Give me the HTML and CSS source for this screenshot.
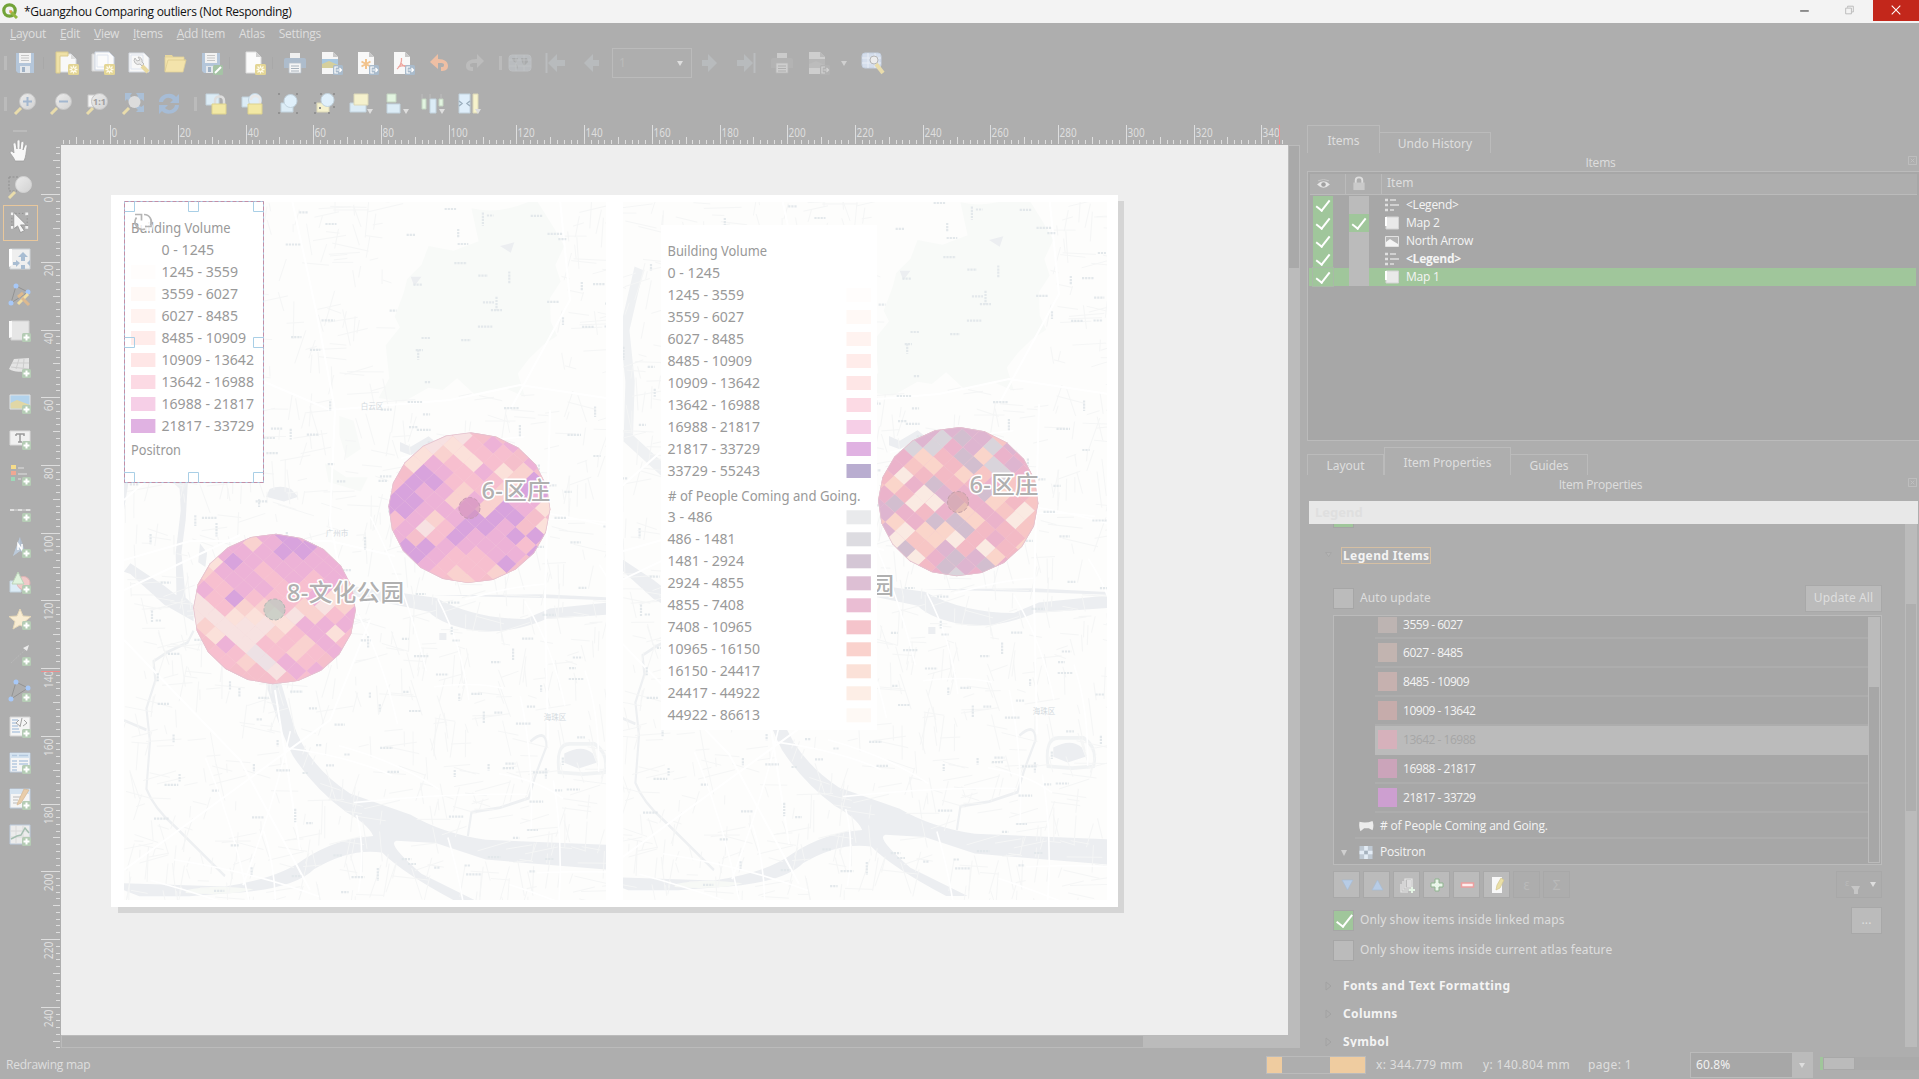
FILE: index.html
```html
<!DOCTYPE html>
<html lang="en">
<head>
<meta charset="utf-8">
<title>*Guangzhou Comparing outliers</title>
<link rel="stylesheet" href="styles.css">
</head>
<body>
<svg class="defs" width="0" height="0" aria-hidden="true">
<defs>
<linearGradient id="lens" x1="0" y1="0" x2="1" y2="1"><stop offset="0" stop-color="#ececec"/><stop offset="1" stop-color="#d2d2d2"/></linearGradient>
<g id="plus"><rect x="14" y="14" width="9" height="9" rx="1.5" fill="#b5ccb5"/><path d="M18.5 15.5v6M15.5 18.5h6" stroke="#fff" stroke-width="2"/></g>
<g id="star-badge"><rect x="13" y="13" width="11" height="11" rx="1.5" fill="#e3d594"/><path d="M18.500 14.500v8M14.500 18.500h8M15.500 15.500l6 6M21.500 15.500l-6 6" stroke="#fffbe8" stroke-width="1.300"/><circle cx="18.500" cy="18.500" r="1.200" fill="#e3d594"/></g>
<g id="out-badge"><rect x="14" y="14" width="10" height="10" rx="1.500" fill="#a9bbcc"/><path d="M19 16h-3v6h3M17.500 19h5M20.500 17l2 2-2 2" stroke="#fff" fill="none" stroke-width="1.200"/></g>
<g id="caret"><path d="M18 17h6l-3 5z" fill="#dedede"/></g>
<symbol id="save" viewBox="0 0 24 24"><path d="M3 2h18v20H5l-2-2z" fill="#b4c6da"/><path d="M6 2h12v10H6z" fill="#f2f2f2"/><path d="M8 4.500h8M8 7h8M8 9.500h8" stroke="#c6c6c6"/><path d="M7 15h10v7H7z" fill="#e4e8ec"/><path d="M9 16h3v5H9z" fill="#a0b2c6"/></symbol>
<symbol id="saveas" viewBox="0 0 24 24"><use href="#save"/><rect x="14" y="14" width="10" height="10" rx="1.500" fill="#a5c3a5"/><path d="M16 22l6-6" stroke="#fff" stroke-width="2"/></symbol>
<symbol id="newlay" viewBox="0 0 24 24"><path d="M4 3h12l5 5v13H4z" fill="#f8f8f8" stroke="#d8dce2"/><path d="M1 1h12v4H5v17H1z" fill="#efe1a6" stroke="#dacb8e"/><path d="M16 3v5h5" fill="#ddd"/><use href="#star-badge"/></symbol>
<symbol id="duplay" viewBox="0 0 24 24"><path d="M1 3h15v17H1z" fill="#e9e9e9" stroke="#d4d4d4"/><path d="M4 1h14l5 5v13H4z" fill="#fbfbfb" stroke="#cdd5e2"/><path d="M6 4h11v12H6z" fill="none" stroke="#dfe5f0"/><use href="#star-badge"/></symbol>
<symbol id="manlay" viewBox="0 0 24 24"><path d="M2 2h15l5 5v14H2z" fill="#f8f8f8" stroke="#d5dae2"/><path d="M4 4h12v14H4z" fill="none" stroke="#dfe5f0"/><path d="M8 7a4 4 0 0 0 5 6l2 2 2-2-2-2a4 4 0 0 0-4-5l2 3-3 1z" fill="#e9e9e9" stroke="#bdbdbd"/><path d="M15 15l6 6" stroke="#e8d9a0" stroke-width="4"/></symbol>
<symbol id="folder" viewBox="0 0 24 24"><path d="M2 20V4h7l2 3h10v3" fill="#e8d79d"/><path d="M2 20V6h19v3h2l-3 12H2z" fill="#f3e3ab" stroke="#e0d09a" stroke-width=".8"/><path d="M2 20L5 9h18" fill="none" stroke="#dccb90" stroke-width=".8"/></symbol>
<symbol id="newpage" viewBox="0 0 24 24"><path d="M4 1h10l5 5v16H4z" fill="#fbfbfb" stroke="#ddd"/><path d="M14 1v5h5z" fill="#d0d0d0"/><use href="#star-badge"/></symbol>
<symbol id="print" viewBox="0 0 24 24"><path d="M7 2h10v6H7z" fill="#efefef"/><path d="M3 7h18q2 0 2 2v8H1V9q0-2 2-2z" fill="#adbccc"/><path d="M6 12h12v10H6z" fill="#f5f5f5" stroke="#b8c2cc" stroke-width=".8"/><path d="M8 15h8M8 17.500h8M8 20h8" stroke="#a9b3bd"/></symbol>
<symbol id="eximg" viewBox="0 0 24 24"><path d="M3 1h11l5 5v17H3z" fill="#f6f6f6"/><path d="M14 1v5h5z" fill="#c9c9c9"/><path d="M3 8h16v9H3z" fill="#a9c8e0"/><path d="M3 13l7-3 9 4v3H3z" fill="#d5cf9c"/><use href="#out-badge"/></symbol>
<symbol id="exsvg" viewBox="0 0 24 24"><path d="M3 1h11l5 5v17H3z" fill="#f8f8f8"/><path d="M14 1v5h5z" fill="#c9c9c9"/><path d="M11 8v10M6.500 10.500l9 5M15.500 10.500l-9 5" stroke="#f2c38c" stroke-width="2"/><use href="#out-badge"/></symbol>
<symbol id="expdf" viewBox="0 0 24 24"><path d="M3 1h11l5 5v17H3z" fill="#f8f8f8"/><path d="M14 1v5h5z" fill="#c9c9c9"/><path d="M6 18c3-2 5-7 4.500-11M10 12c2 3 4 4 6 4M7 16c3-1 6-2 9-1" fill="none" stroke="#eda7a0" stroke-width="1.300"/><use href="#out-badge"/></symbol>
<symbol id="undo" viewBox="0 0 24 24"><path d="M3 11l8-8v5c7 0 10 3 10 7s-3 5-7 5v-4c2 0 3 0 3-2s-2-2-6-2v6z" fill="#eebfa4"/></symbol>
<symbol id="redo" viewBox="0 0 24 24"><path d="M21 10l-7-7v5C6 8 3 11 3 15s3 5 7 5v-4c-2 0-3 0-3-2s3-2 7-2v5z" fill="#bcbcbc"/></symbol>
<symbol id="atlas" viewBox="0 0 24 24"><rect x="1" y="4" width="22" height="16" rx="3" fill="#b9bcbf" stroke="#bdbfc1"/><path d="M4 7h6l-2 5-3-2zM13 7h6l1 4-4 4-2-4zM8 13l2 2-1 4" fill="#a9abac"/><path d="M1 9h22M1 15h22M8 4v16M16 4v16" stroke="#c3c5c7" stroke-width=".7"/></symbol>
<symbol id="first" viewBox="0 0 24 24"><path d="M2.500 2v20" stroke="#bbbdbf" stroke-width="2"/><path d="M4 12l9-9v6h8v6h-8v6z" fill="#b8bbbd"/></symbol>
<symbol id="prev" viewBox="0 0 24 24"><path d="M4 12l9-9v6h6v6h-6v6z" fill="#b8bbbd"/></symbol>
<symbol id="next" viewBox="0 0 24 24"><path d="M19 12l-9-9v6H4v6h6v6z" fill="#b8bbbd"/></symbol>
<symbol id="last" viewBox="0 0 24 24"><path d="M20.500 2v20" stroke="#bbbdbf" stroke-width="2"/><path d="M19 12l-9-9v6H3v6h7v6z" fill="#b8bbbd"/></symbol>
<symbol id="aset" viewBox="0 0 24 24"><rect x="1" y="2" width="19" height="15" rx="3" fill="#d5deec" stroke="#c5d0e0"/><path d="M1 7h19M1 12h19M7 2v15M14 2v15" stroke="#e8edf5"/><circle cx="13" cy="9" r="4" fill="#ececec" stroke="#b6b6b6"/><path d="M15 13l7 9" stroke="#e9dcab" stroke-width="4"/></symbol>
<symbol id="zin" viewBox="0 0 24 24"><path d="M2 22l6-6" stroke="#e9dcab" stroke-width="3"/><circle cx="14.500" cy="9.500" r="8" fill="url(#lens)" stroke="#c6c6c6"/><path d="M14.500 5v9M10 9.500h9" stroke="#a3b7cf" stroke-width="2"/></symbol>
<symbol id="zout" viewBox="0 0 24 24"><path d="M2 22l6-6" stroke="#e9dcab" stroke-width="3"/><circle cx="14.500" cy="9.500" r="8" fill="url(#lens)" stroke="#c6c6c6"/><path d="M10 9.500h9" stroke="#a3b7cf" stroke-width="2"/></symbol>
<symbol id="z11" viewBox="0 0 24 24"><path d="M3 3h8v12H3z" fill="#f2f2f2" stroke="#ccc"/><path d="M2 22l6-6" stroke="#e9dcab" stroke-width="3"/><circle cx="14.500" cy="9.500" r="8" fill="url(#lens)" stroke="#c6c6c6"/><text x="14.500" y="13" font-size="9" font-weight="bold" text-anchor="middle" fill="#a0a0a0">1:1</text></symbol>
<symbol id="zfull" viewBox="0 0 24 24"><path d="M2 22l6-6" stroke="#e9dcab" stroke-width="3"/><path d="M4 1h7L9 4l4 4-4 3-3-4-2 2zM23 1v8l-3-2-4 4-3-3 4-4-2-3zM23 20h-8l2-2-4-4 3-3 4 4 3-2z" fill="#aabfd6"/><circle cx="13.500" cy="10" r="6" fill="#dcdcdc"/></symbol>
<symbol id="refresh" viewBox="0 0 24 24"><path d="M2 10C2 2 15-1 19 5l3-3v9h-9l3-3C12 4 7 6 6 10zM22 13c0 9-13 11-17 6l-3 3v-9h9l-3 3c4 4 9 2 10-3z" fill="#a6bcd6"/></symbol>
<symbol id="lock" viewBox="0 0 24 24"><path d="M1 2h13v11H1z" fill="#dcecf6" stroke="#c2d3de"/><path d="M10 13V9q0-4.500 4.500-4.500T19 9v4" fill="none" stroke="#dedede" stroke-width="2.500"/><path d="M7 12h14v10H7z" fill="#f2e8a4" stroke="#ddd28e"/></symbol>
<symbol id="unlock" viewBox="0 0 24 24"><path d="M1 5h12v10H1z" fill="#dcecf6" stroke="#c2d3de"/><circle cx="14" cy="8" r="6.500" fill="#e0eef8" stroke="#c2d3de"/><path d="M10 8q0-4 4.500-4T19 8v5" fill="none" stroke="#e8e8e8" stroke-width="2.500"/><path d="M7 12h14v10H7z" fill="#f2e8a4" stroke="#ddd28e"/></symbol>
<symbol id="group" viewBox="0 0 24 24"><path d="M4 11h12v9H4z" fill="#dcecf6" stroke="#c2d3de"/><circle cx="13.500" cy="9" r="6.500" fill="#e0f0fb" stroke="#c2d3de"/><path d="M1 1h2v2H1zM19 1h2v2h-2zM1 20h2v2H1zM19 20h2v2h-2z" fill="#929292"/></symbol>
<symbol id="ungroup" viewBox="0 0 24 24"><path d="M4 11h12v9H4z" fill="#f5f1cd" stroke="#dcd8b8"/><circle cx="14.500" cy="8" r="6.500" fill="#e0f0fb" stroke="#c2d3de"/><path d="M7 1h2v2H7zM20 1h2v2h-2zM1 10h2v2H1zM1 20h2v2H1zM15 20h2v2h-2zM6 15h2v2H6zM20 14h2v2h-2z" fill="#929292"/></symbol>
<symbol id="raise" viewBox="0 0 24 24"><path d="M1 11h16v9H1z" fill="#dcecf6" stroke="#c2d3de"/><path d="M5 2h14v11H5z" fill="#f5f1cd" stroke="#dcd8b8"/><use href="#caret"/></symbol>
<symbol id="align" viewBox="0 0 24 24"><path d="M2 2h9v8H2z" fill="#e2f4e0" stroke="#c4d6c2"/><path d="M2 12h13v9H2z" fill="#dcecf6" stroke="#c2d3de"/><use href="#caret"/></symbol>
<symbol id="distrib" viewBox="0 0 24 24"><path d="M1 7h4v10H1zM18 7h4v7h-4z" fill="#e2f4e0" stroke="#c4d6c2"/><path d="M9 7h6v14H9z" fill="#dcecf6" stroke="#c2d3de"/><path d="M1 2v5M9 2v5M20 2v5" stroke="#bdbdbd"/><use href="#caret"/></symbol>
<symbol id="resize" viewBox="0 0 24 24"><path d="M2 2h11v19H2z" fill="#dfeefa" stroke="#c2d3de"/><path d="M16 2h5v19h-5z" fill="#f7f3cc" stroke="#dcd8b8"/><path d="M2 9l3 2.500L2 14M13 9l-3 2.500 3 2.500" stroke="#9db0bf" fill="none" stroke-width="1.500"/><use href="#caret"/></symbol>
<symbol id="hand" viewBox="0 0 24 24"><path d="M7 22c-1-4-5-7-5-9 1-2 3 0 4 1L5 5c1-2 3-1 3 0l1 5V2c1-2 3-1 3 0v8l1-7c1-1 3-1 3 1l-1 7 2-5c1-1 3 0 2 2-1 5-1 10-3 14z" fill="#f8f8f8" stroke="#a0a0a0" stroke-width=".8"/></symbol>
<symbol id="zoomt" viewBox="0 0 24 24"><path d="M1 2h9M1 2v14h8" fill="none" stroke="#8f8f8f" stroke-dasharray="2 1.500"/><path d="M1 23l6-6" stroke="#e9dcab" stroke-width="3"/><circle cx="15.500" cy="9.500" r="8" fill="url(#lens)" stroke="#d2d2d2"/></symbol>
<symbol id="select" viewBox="0 0 24 24"><path d="M3 2h16v15H3z" fill="none" stroke="#8f8f8f" stroke-dasharray="1.500 2"/><path d="M2 1h3v3H2zM17 1h3v3h-3zM2 15h3v3H2zM17 15h3v3h-3z" fill="#f0f0f0"/><path d="M5 1l13 13-6 0 4 6-4 2-3-7-4 3z" fill="#f6f6f6" stroke="#909090" stroke-width=".8"/></symbol>
<symbol id="movec" viewBox="0 0 24 24"><path d="M2 2h20v20H2z" fill="#efefef" stroke="#cdd2d6"/><path d="M1 2h3v16l-3 2z" fill="#fff"/><path d="M15 5l5 5h-3v4h-4v-4h-3zM5 15h3v-2l4 3-4 4v-2H5zM13 18h4v4h-4zM22 13v6l-3-3z" fill="#a9bdd2"/></symbol>
<symbol id="nodes" viewBox="0 0 24 24"><path d="M8 3L3 20M8 3l12 6M3 20l17-11" stroke="#909090" stroke-width=".9"/><circle cx="8" cy="3" r="2.500" fill="#a7c8f7"/><circle cx="20" cy="9" r="2.500" fill="#a7c8f7"/><circle cx="3" cy="20" r="2.500" fill="#a7c8f7"/><path d="M10 21l10-10" stroke="#f1dda1" stroke-width="3"/><path d="M10 14l5-4M14 15l7 7" stroke="#dcb98f" stroke-width="3"/></symbol>
<symbol id="addmap" viewBox="0 0 24 24"><path d="M3 2h18v19H3z" fill="#e6e6e6" stroke="#d2d2d2"/><path d="M1 2h3v16l-3 1z" fill="#fafafa"/><use href="#plus"/></symbol>
<symbol id="add3d" viewBox="0 0 24 24"><path d="M1 14L6 4l15-1v15c-7-2-14 0-20-4z" fill="#e4e4e4"/><path d="M4 8l17 0M3 12l18 2M11 4L8 14M16 4l-1 12" stroke="#cdcdcd"/><use href="#plus"/></symbol>
<symbol id="addpic" viewBox="0 0 24 24"><path d="M2 4h20v14H2z" fill="#b3d3ec" stroke="#e1e4e6"/><path d="M2.500 12L9 9l13 5v3.500H2.500z" fill="#e0d7a6"/><use href="#plus"/></symbol>
<symbol id="addtxt" viewBox="0 0 24 24"><path d="M2 4h20v14H2z" fill="#f1f1f1" stroke="#dadada"/><path d="M8 7h8v2M8 7v2M12 7v8M10 15h4" fill="none" stroke="#9a9a9a" stroke-width="1.500"/><use href="#plus"/></symbol>
<symbol id="addleg" viewBox="0 0 24 24"><path d="M3 2h5v4H3z" fill="#f6dc8a"/><path d="M3 8h5v4H3z" fill="#f0a792"/><path d="M3 14h4v4H3z" fill="#9ed8b8"/><path d="M10 5h6M10 11h9M10 16h3" stroke="#cfcfcf" stroke-width="1.500"/><use href="#plus"/></symbol>
<symbol id="addscale" viewBox="0 0 24 24"><path d="M2 11h21" stroke="#c3c3c3" stroke-width="2"/><path d="M2 11h21" stroke="#e0e0e0" stroke-width="2" stroke-dasharray="4 4"/><use href="#plus"/></symbol>
<symbol id="addnorth" viewBox="0 0 24 24"><path d="M12 2l7 19-7-5-7 5z" fill="#b0bccc"/><path d="M12 2L5 21l7-5z" fill="#bccada"/><path d="M10 15V9l4 6V9" stroke="#fff" fill="none" stroke-width="1.500"/><use href="#plus"/></symbol>
<symbol id="addshape" viewBox="0 0 24 24"><path d="M2 10h11v11H2z" fill="#dcecf6" stroke="#c2d3de"/><circle cx="15.500" cy="12" r="6.500" fill="#f0c9c9" stroke="#dfb4b4"/><path d="M10 1l6 12H4z" fill="#dff3dc" stroke="#bcd3ba"/><use href="#plus"/></symbol>
<symbol id="addstar" viewBox="0 0 24 24"><path d="M12 2l3 7 8 .5-6 5 2 7.500-7-4-7 4 2-7.500-6-5L9 9z" fill="#f8ecd2" stroke="#e6d8b8"/><use href="#plus"/></symbol>
<symbol id="addarrow" viewBox="0 0 24 24"><path d="M3 20L18 6" stroke="#b9b9b9" stroke-dasharray="2 1"/><path d="M21 2l-6 3 4 3z" fill="#ececec"/><use href="#plus"/></symbol>
<symbol id="addnode" viewBox="0 0 24 24"><path d="M8 3L3 20M8 3l12 6M3 20l17-11" stroke="#909090" stroke-width=".9"/><circle cx="8" cy="3" r="2.500" fill="#a7c8f7"/><circle cx="20" cy="9" r="2.500" fill="#a7c8f7"/><circle cx="3" cy="20" r="2.500" fill="#a7c8f7"/><use href="#plus"/></symbol>
<symbol id="addhtml" viewBox="0 0 24 24"><path d="M2 2h20v19H2z" fill="#f5f5f5" stroke="#d3d3d3"/><path d="M4 5h6M4 8h4M4 11h6M4 14h7M4 17h8" stroke="#b5c9df" stroke-width="1.500"/><path d="M11 5L8 8l4 3M14 3l-2 9M16 5l3 3-4 3" stroke="#a3a3a3" fill="none"/><use href="#plus"/></symbol>
<symbol id="addtab" viewBox="0 0 24 24"><path d="M2 2h20v19H2z" fill="#f5f5f5" stroke="#bccbdd"/><path d="M2 2h20v5H2z" fill="#d5e3f0"/><path d="M4 4.500h5M11 4.500h9M4 10h5M11 10h9M4 13h5M11 13h9M4 16h5M4 19h5" stroke="#b5c9df" stroke-width="1.300"/><use href="#plus"/></symbol>
<symbol id="addman" viewBox="0 0 24 24"><path d="M2 2h20v19H2z" fill="#f5f5f5" stroke="#bccbdd"/><path d="M2 2h20v5H2z" fill="#d5e3f0"/><path d="M5 10h8M5 13h5M5 16h8" stroke="#bbb"/><path d="M10 15L16 2l5 1-8 13-4 2z" fill="#e9cdaa" stroke="#d6b894" stroke-width=".7"/><use href="#plus"/></symbol>
<symbol id="addchart" viewBox="0 0 24 24"><path d="M2 2h20v19H2z" fill="#ececec" stroke="#bccbdd"/><path d="M2 8h20M2 14h20M8 2v19M15 2v19" stroke="#dadada"/><path d="M3 16l6-3 4-1 4-7 4 5" stroke="#a5bfb1" fill="none" stroke-width="1.500"/><use href="#plus"/></symbol>
<symbol id="leg" viewBox="0 0 14 14"><path d="M0 2h3M0 7h3M0 12h3" stroke="#e0e0e0" stroke-width="2.500"/><path d="M5 2h6M5 7h9M5 12h4" stroke="#e0e0e0" stroke-width="1.500"/></symbol>
<symbol id="mapi" viewBox="0 0 14 14"><path d="M1 1h12.500v12H1z" fill="#e9e9e9" stroke="#d4d4d4"/><path d="M0 1h2v9H0z" fill="#fff"/></symbol>
<symbol id="pici" viewBox="0 0 14 14"><path d="M.5 2.500h13v10H.5z" fill="#b4b4b4" stroke="#e2e2e2"/><path d="M1 8l4-3 3 2 5 3v2H1z" fill="#f4f4f4"/></symbol>
</defs>
</svg>

<div class="app">
<header class="title">
  <svg class="logo" viewBox="0 0 16 16"><circle cx="7.500" cy="7.500" r="5.700" fill="none" stroke="#72a338" stroke-width="3.200"/><path d="M8 8l7 7" stroke="#93b740" stroke-width="3"/><path d="M7 7l3.500 1-2 2.500z" fill="#e99d4a"/></svg>
  <span class="title-text">*Guangzhou Comparing outliers (Not Responding)</span>
  <div class="winbtns">
    <svg viewBox="0 0 45 22"><path d="M19 11.500h9" stroke="#222"/></svg>
    <svg viewBox="0 0 45 22"><path d="M18.500 8.500h6v6h-6zM20.500 8V6.500h6v6H25" fill="none" stroke="#bbb"/></svg>
    <svg class="close" viewBox="0 0 45 22"><path d="M18 6l9 9M27 6l-9 9" stroke="#fff" stroke-width="1.100"/></svg>
  </div>
</header>
<nav class="menu"><span><u>L</u>ayout</span><span><u>E</u>dit</span><span><u>V</u>iew</span><span><u>I</u>tems</span><span><u>A</u>dd Item</span><span>Atlas</span><span>Settings</span></nav>
<div class="bar bar1">
  <i class="grip"></i>
  <svg><use href="#save"/></svg><i class="sep s6"></i>
  <svg><use href="#newlay"/></svg><svg><use href="#duplay"/></svg><svg><use href="#manlay"/></svg><svg><use href="#folder"/></svg><svg><use href="#saveas"/></svg><i class="sep s7"></i>
  <svg><use href="#newpage"/></svg><i class="sep s5"></i>
  <svg><use href="#print"/></svg><svg><use href="#eximg"/></svg><svg><use href="#exsvg"/></svg><svg><use href="#expdf"/></svg><svg><use href="#undo"/></svg><svg><use href="#redo"/></svg><i class="grip g2"></i>
  <svg><use href="#atlas"/></svg><svg><use href="#first"/></svg><svg><use href="#prev"/></svg>
  <div class="pagebox"><span>1</span><b class="tri"></b></div>
  <svg><use href="#next"/></svg><svg><use href="#last"/></svg><svg class="dim"><use href="#print"/></svg><svg class="dim"><use href="#eximg"/></svg><b class="tri solo"></b>
  <svg><use href="#aset"/></svg>
</div>
<div class="bar bar2">
  <i class="grip"></i>
  <svg><use href="#zin"/></svg><svg><use href="#zout"/></svg><svg><use href="#z11"/></svg><svg><use href="#zfull"/></svg><svg><use href="#refresh"/></svg><i class="grip g3"></i>
  <svg><use href="#lock"/></svg><svg><use href="#unlock"/></svg><svg><use href="#group"/></svg><svg><use href="#ungroup"/></svg><svg><use href="#raise"/></svg><svg><use href="#align"/></svg><svg><use href="#distrib"/></svg><svg><use href="#resize"/></svg>
</div>

<main class="main">
  <aside class="tools">
    <i class="tgrip"></i>
    <svg><use href="#hand"/></svg><svg><use href="#zoomt"/></svg><svg class="on"><use href="#select"/></svg><svg><use href="#movec"/></svg><svg><use href="#nodes"/></svg><svg><use href="#addmap"/></svg><svg><use href="#add3d"/></svg><svg><use href="#addpic"/></svg><svg><use href="#addtxt"/></svg><svg><use href="#addleg"/></svg><svg><use href="#addscale"/></svg><svg><use href="#addnorth"/></svg><svg><use href="#addshape"/></svg><svg><use href="#addstar"/></svg><svg><use href="#addarrow"/></svg><svg><use href="#addnode"/></svg><svg><use href="#addhtml"/></svg><svg><use href="#addtab"/></svg><svg><use href="#addman"/></svg><svg><use href="#addchart"/></svg>
  </aside>
  <section class="view">
    <svg id="canvas" width="1260" height="924" viewBox="40 124 1260 924">
      <defs>
        <clipPath id="m1"><path d="M124 202h482v698H124z"/></clipPath>
        <clipPath id="m2"><path d="M623 202h484v698H623z"/></clipPath>
        <clipPath id="cA"><path id="gonA"/></clipPath>
        <clipPath id="cB"><path id="gonB"/></clipPath>
        <clipPath id="cC"><path id="gonC"/></clipPath>
        <g id="base">
          <path d="M100 180h540v740H100z" fill="#fdfdfc"/>
          <g transform="translate(100 180) scale(.35714 .47192)">
            <path d="M1040 60Q1120 75 1220 40L1270 100 1300 140 1275 180 1290 215 1260 250 1262 300 1280 330 1240 350 1200 380 1170 410 1190 460 1130 440 1050 455 1000 420 960 445 920 440 850 470 780 462 810 420 800 350 840 312 825 290 850 240 860 210 900 180 920 140 990 150 1060 130ZM630 600l60 30 60 0-20 30-90-20zM670 500l40 10 20 60-40 20-20-50z" fill="#f8faf8"/>
            <g fill="#eceef1">
              <path d="M462 1060L505 1060 540 1150Q580 1240 700 1300L870 1345Q960 1385 1080 1398L1465 1410V1464L1270 1452 1080 1440 940 1405 830 1400Q800 1405 900 1470L1060 1530 1000 1530Q850 1470 790 1425 700 1415 600 1460 540 1505 350 1512L250 1518H110L67 1505V1490L350 1497Q500 1480 570 1440 660 1395 765 1390 750 1365 690 1340 600 1290 540 1220 500 1160 462 1060Z"/>
              <path d="M700 860L940 885Q1050 930 1190 930L1260 908 1465 892V919L1250 930Q1150 962 1060 956 960 945 920 915L700 880Z"/>
              <path d="M930 880L1240 878 1465 886 1465 892 1240 886Z"/>
              <path d="M222 640H246L240 720 228 790 240 885 262 900V935L180 900 85 835 67 830 85 812 180 860 214 880 212 790 226 700ZM50 640H80L67 700Z"/>
              <path d="M262 900L440 960 505 1060 462 1060 400 985 262 925Z"/>
              <path d="M440 975Q560 900 690 862L695 878Q560 930 450 990Z"/>
              <path d="M840 555l30 10 50-22 20 12-70 28-30-8zM475 655q30-10 60 0l20 16-40 10-50-10zM1300 1215q50-20 80 0l10 20-50 12-40-12zM280 770l20 20-5 30-20-10zM950 960l20 0 0 15-20 0zM1120 140l40-8-10 22zM870 205l30 0-20 20z"/>
            </g>
            <path d="M140 200L100 330 115 440 110 560 240 650" stroke="#eff1f3" stroke-width="26" fill="none"/>
            <path d="M262 955L245 980 190 1000 150 1020 155 1060 130 1120 140 1190 130 1290Q150 1330 210 1370L350 1475M67 1145L130 1165M1205 1190Q1250 1160 1250 1200L1220 1260 1200 1310 1120 1330 1040 1340 1030 1390" stroke="#eef0f2" stroke-width="6" fill="none"/>
            <path d="M1285 1255q-10-60 30-60h70q40 20 28 60l-60 4z" fill="none" stroke="#f1f3f4" stroke-width="8"/>
            <path d="M240 1505q80-14 190-2-60 14-190 8z" fill="#f7f9f6"/>
          </g>
          <g id="roads"></g>
          <g font-size="7.500" fill="#d3d9de" text-anchor="middle"><text x="372" y="409">白云区</text><text x="337" y="536">广州市</text><text x="555" y="720">海珠区</text></g>
        </g>
      </defs>
      <path d="M61 145h1227v890H61z" fill="#eee"/>
      <path d="M118 201h1006v712H118z" fill="#d5d5d5"/>
      <path d="M111 195h1007v712H111z" fill="#fff"/>
      <g clip-path="url(#m1)">
        <use href="#base"/>
        <g id="circA" clip-path="url(#cA)"></g><g id="circB" clip-path="url(#cB)"></g>
        <circle cx="469.500" cy="508" r="10.500" fill="#d191bb" fill-opacity=".6" stroke="#c79ab4" stroke-dasharray="4 2"/>
        <circle cx="274.500" cy="609.500" r="10.500" fill="#bdc9c2" fill-opacity=".75" stroke="#b0b5b3" stroke-dasharray="4 2"/>
        <text class="place" x="481.500" y="499" textLength="69">6-区庄</text>
        <text class="place" x="287" y="600.500" textLength="117">8-文化公园</text>
      </g>
      <g clip-path="url(#m2)">
        <use href="#base" x="489" y="-6"/>
        <g id="circC" clip-path="url(#cC)"></g>
        <circle cx="958" cy="502" r="10.500" fill="#d0a19c" fill-opacity=".45" stroke="#c2a0a8" stroke-dasharray="4 2"/>
        <text class="place" x="969.500" y="493" textLength="69">6-区庄</text>
        <text class="place" x="777" y="593.500" textLength="117">8-文化公园</text>
      </g>
      <path d="M124.500 201.500h139v281h-139z" fill="#fff"/>
      <path d="M661 225h216v505H661z" fill="#fff"/>
      <g id="legends" class="lg"></g>
      <path d="M124.500 201.500h139v281h-139z" fill="none" stroke="#a9cfe6"/>
      <path d="M124.500 201.500h139v281h-139z" fill="none" stroke="#c28fa8" stroke-dasharray="4 2"/>
      <path d="M124.500 211.500h10v-10M188.500 201.500v10h10v-10M253.500 201.500v10h10M124.500 337.500h10v10h-10M263.500 337.500h-10v10h10M124.500 472.500h10v10M188.500 482.500v-10h10v10M253.500 482.500v-10h10" fill="none" stroke="#a9cfe6"/>
      <path d="M138 216l1 11 5 4 8 0 1-5-4-9z" fill="#fff" fill-opacity=".8"/>
      <path d="M150.500 225.500A7.500 7.500 0 0 0 144 214.500M151 219v7.500h-6M136.500 217.500A7.500 7.500 0 0 0 145 229M135 214.500h6.500v6" fill="none" stroke="#b5b5b5" stroke-width="1.700"/>
      <g id="rulers"></g>
    </svg>
    <div class="vscroll"><i></i></div>
    <div class="hscroll"><i></i></div>
  </section>

  <aside class="panel">
    <div class="tabs t1"><span class="cur w72">Items</span><span class="w111">Undo History</span></div>
    <div class="dock"><span>Items</span><svg viewBox="0 0 10 10"><path d="M.5.500h9v9h-9zM3 3l4 4M7 3L3 7" fill="none" stroke="#c1c1c1"/></svg></div>
    <div class="tree">
      <div class="thead"><span class="c1"><svg viewBox="0 0 16 12"><path d="M1 6q7-7 14 0-7 7-14 0z" fill="#e6e6e6"/><circle cx="8" cy="6" r="2.500" fill="#a0a0a0"/><path d="M2 2q6-3 12 0" stroke="#c8c8c8" fill="none"/></svg></span><span class="c2"><svg viewBox="0 0 12 16"><path d="M2.500 8V4.500q0-3 3.500-3t3.500 3V8" fill="none" stroke="#dedede" stroke-width="2"/><path d="M0 7h12v8H0z" fill="#cacaca"/></svg></span><span class="c3">Item</span></div>
      <div class="trow"><i class="ck"></i><i class="lk"></i><svg><use href="#leg"/></svg><span>&lt;Legend&gt;</span></div>
      <div class="trow"><i class="ck"></i><i class="lk ck"></i><svg><use href="#mapi"/></svg><span>Map 2</span></div>
      <div class="trow"><i class="ck"></i><i class="lk"></i><svg><use href="#pici"/></svg><span>North Arrow</span></div>
      <div class="trow"><i class="ck"></i><i class="lk"></i><svg><use href="#leg"/></svg><b>&lt;Legend&gt;</b></div>
      <div class="trow sel"><i class="ck"></i><i class="lk"></i><svg><use href="#mapi"/></svg><span>Map 1</span></div>
    </div>
    <div class="tabs t2"><span class="w77">Layout</span><span class="cur w127">Item Properties</span><span class="w77">Guides</span></div>
    <div class="dock d2"><span>Item Properties</span><svg viewBox="0 0 10 10"><path d="M.5.500h9v9h-9zM3 3l4 4M7 3L3 7" fill="none" stroke="#c1c1c1"/></svg></div>
    <div class="lhead">Legend</div>
    <div class="props">
      <div class="pcol">
        <i class="greenbit"></i>
        <div class="sect open"><svg viewBox="0 0 10 8"><path d="M1 1h7L4.500 6z" fill="#b5b5b5" stroke="#a3a3a3"/></svg><b>Legend Items</b></div>
        <div class="line l1"><i class="box"></i><span>Auto update</span><div class="btn upd">Update All</div></div>
        <div class="list">
          <div class="rows">
            <div class="r first"><i class="c-a"></i>3559 - 6027</div>
            <div class="r"><i class="c-b"></i>6027 - 8485</div>
            <div class="r"><i class="c-c"></i>8485 - 10909</div>
            <div class="r"><i class="c-d"></i>10909 - 13642</div>
            <div class="r hot"><i class="c-e"></i>13642 - 16988</div>
            <div class="r"><i class="c-f"></i>16988 - 21817</div>
            <div class="r"><i class="c-g"></i>21817 - 33729</div>
            <div class="g"><svg viewBox="0 0 16 14"><path d="M1 2q7 2 14-1 2 5 0 10l-4-2-5 0-4 3q-2-4-1-10z" fill="#ececec"/></svg><span># of People Coming and Going.</span></div>
            <div class="g pos"><svg viewBox="0 0 14 14"><path d="M0 0h14v14H0z" fill="#bfc9d3"/><path d="M5 0h4v5h5v4H9v5H5V9H0V5h5z" fill="#e3ecf5"/><path d="M5 5h4v4H5z" fill="#a5b1bd"/></svg><span>Positron</span></div>
          </div>
          <div class="lscroll"><i></i></div>
        </div>
        <div class="btns">
          <div class="btn"><svg viewBox="0 0 20 20"><path d="M5 5h11l-5.500 10z" fill="#b7cce6" stroke="#a8bbd3" stroke-width=".7"/></svg></div>
          <div class="btn"><svg viewBox="0 0 20 20"><path d="M5 15h11L10.500 5z" fill="#b7cce6" stroke="#a8bbd3" stroke-width=".7"/></svg></div>
          <div class="btn"><svg viewBox="0 0 20 20"><path d="M8 4h7v9H8zM6 6v9h7M4 9v8h7" fill="none" stroke="#e6e6e6" stroke-width="1.200"/><path d="M10 5h4v7h-4z" fill="#ddd"/><path d="M15 12v6M12 15h6" stroke="#e4f4e4" stroke-width="2"/></svg></div>
          <div class="btn"><svg viewBox="0 0 20 20"><path d="M8 4h4v4h4v4h-4v4H8v-4H4V8h4z" fill="#eaf5ea" stroke="#8fb48f"/></svg></div>
          <div class="btn"><svg viewBox="0 0 20 20"><path d="M4.500 8h12v4h-12z" fill="#fdeeee" stroke="#eda0a0" stroke-width="1.500"/></svg></div>
          <div class="btn"><svg viewBox="0 0 20 20"><path d="M5 2h10v16H5z" fill="#f8f8f8"/><path d="M9 15l1-5 4-7 3 2-4 8z" fill="#eadfa6" stroke="#d2c68e" stroke-width=".7"/></svg></div>
          <div class="btn off">ε</div><div class="btn off">Σ</div>
          <div class="btn off flt"><svg viewBox="0 0 20 20"><path d="M9 11h9l-2 4v4h-4v-4z" fill="#c6c6c6"/><text x="3" y="11" font-size="9" fill="#b9b9b9">ε</text></svg><b class="tri"></b></div>
        </div>
        <div class="line l2"><i class="box ckd"></i><span>Only show items inside linked maps</span><div class="btn dots">...</div></div>
        <div class="line l3"><i class="box"></i><span>Only show items inside current atlas feature</span></div>
        <div class="sect"><svg viewBox="0 0 8 10"><path d="M1 1v8l5-4z" fill="none" stroke="#a2a2a2"/></svg><b>Fonts and Text Formatting</b></div>
        <div class="sect"><svg viewBox="0 0 8 10"><path d="M1 1v8l5-4z" fill="none" stroke="#a2a2a2"/></svg><b>Columns</b></div>
        <div class="sect"><svg viewBox="0 0 8 10"><path d="M1 1v8l5-4z" fill="none" stroke="#a2a2a2"/></svg><b>Symbol</b></div>
      </div>
      <div class="pscroll"><i></i></div>
    </div>
  </aside>
</main>
<footer class="status">
  <span class="msg">Redrawing map</span>
  <div class="prog"><i class="p1"></i><i class="p2"></i></div>
  <span class="sx">x: 344.779 mm</span><span class="sy">y: 140.804 mm</span><span class="sp">page: 1</span>
  <div class="zoom"><span>60.8%</span><div><b class="tri"></b></div></div>
  <div class="slide"><i class="fill"></i><i class="knob"></i><i class="groove"></i></div>
</footer>
</div>
<script src="layout.js"></script>
</body>
</html>
```
FILE: styles.css
```css
* { box-sizing: border-box; }
html, body { margin: 0; height: 100%; }
body { background: #aeaeae; overflow: hidden; font: 12px/16px "Noto Sans", "Noto Sans CJK SC", sans-serif; color: #dedede; }
i { font-style: normal; display: block; }
svg { display: block; flex: none; }
.defs { position: absolute; }
.app { width: 1919px; height: 1079px; display: flex; flex-direction: column; }
.title { height: 23px; flex: none; background: #f3f3f3; display: flex; align-items: flex-start; color: #111; font-family: "Open Sans", sans-serif; }
.logo { width: 16px; height: 16px; margin: 3px 6px 0 2px; }
.title-text { line-height: 23px; letter-spacing: -.29px; flex: 1; }
.winbtns { display: flex; }
.winbtns svg { width: 45px; height: 21px; margin-right: 1px; }
.winbtns .close { background: #c3271b; width: 46px; margin: 0; }
.menu { height: 22px; flex: none; display: flex; gap: 14px; padding: 3px 0 0 10px; font-family: "Open Sans", sans-serif; letter-spacing: -.31px; }
.bar { flex: none; display: flex; align-items: center; padding-left: 4px; }
.bar1 { height: 36px; }
.bar2 { height: 43px; padding-top: 2px; }
.bar > svg { width: 36px; height: 24px; }
.bar .dim { opacity: .45; filter: grayscale(1); }
.grip { width: 3px; height: 14px; background: #bbb; flex: none; }
.g2 { margin: 0 0 0 6px; }
.g3 { margin: 0 2px 0 7px; }
.sep { flex: none; height: 12px; border-left: 1px solid #a8a8a8; }
.s6 { width: 6px; } .s7 { width: 7px; } .s5 { width: 5px; }
.pagebox { width: 80px; height: 30px; margin-left: 2px; border: 1px solid #bbb; display: flex; align-items: center; justify-content: space-between; padding: 0 8px 0 6px; color: #bbb; }
.tri { display: block; width: 0; height: 0; border: 3px solid transparent; border-top: 5px solid #dedede; border-bottom: 0; flex: none; }
.tri.solo { margin: 0 8px 0 5px; opacity: .7; }
.main { flex: none; display: flex; height: 923px; }
.tools { width: 40px; padding: 6px 0 0 2px; display: flex; flex-direction: column; }
.tgrip { width: 14px; height: 2px; background: #bbb; margin: 0 0 0 11px; flex: none; }
.tools svg { width: 36px; height: 24px; margin: 6px 0; }
.tools svg:first-of-type { margin-top: 7px; }
.tools .on { border: 1px solid #e8c79c; height: 36px; width: 35px; margin: 0 1px; padding: 5px; }
.view { position: relative; width: 1260px; height: 924px; flex: none; }
.vscroll { position: absolute; left: 1248px; top: 21px; width: 12px; height: 890px; background: #bbb; border: 1px solid #bbb; }
.vscroll i { height: 122px; background: #a9a9a9; }
.hscroll { position: absolute; left: 21px; top: 911px; width: 1239px; height: 13px; background: #bbb; border: 1px solid #bbb; }
.hscroll i { width: 1081px; height: 11px; background: #adadad; }
.place { font-size: 23.500px; fill: #b0b0b0; stroke: #fff; stroke-width: 3px; paint-order: stroke; stroke-linejoin: round; font-weight: 500; font-family: "Noto Sans", "Noto Sans CJK SC", sans-serif; }
.lg { font-size: 14.500px; fill: #999; }
#rulers { font-size: 12px; fill: #dedede; stroke: none; }

.panel { flex: 1; padding-left: 7px; min-width: 0; display: flex; flex-direction: column; }
.tabs { display: flex; align-items: flex-end; height: 29px; padding-top: 1px; flex: none; }
.tabs span { height: 21px; border: 1px solid #bbb; border-bottom: 0; border-left: 0; text-align: center; line-height: 22px; }
.tabs span:first-child { border-left: 1px solid #bbb; }
.tabs .cur { height: 28px; border-left: 1px solid #bbb; line-height: 29px; }
.w72 { width: 73px; } .w111 { width: 111px; } .w77 { width: 77px; } .w127 { width: 127px; }
.dock { height: 18px; flex: none; position: relative; text-align: center; font-family: "Open Sans", sans-serif; letter-spacing: -.2px; padding-right: 25px; line-height: 20px; }
.dock svg { position: absolute; right: 2px; top: 3px; width: 9px; height: 9px; }
.tree { height: 270px; flex: none; border: 1px solid #bbb; border-right: 0; background: #a7a7a7; padding: 2px 2px 0 2px; }
.thead { height: 21px; display: flex; background: #aeaeae; border-bottom: 1px solid #bbb; margin-bottom: 1px; }
.thead span { border-right: 1px solid #bbb; }
.thead .c1 { width: 36px; padding: 5px 0 0 6px; } .thead .c1 svg { width: 15px; height: 11px; }
.thead .c2 { width: 36px; padding: 2px 0 0 7px; } .thead .c2 svg { width: 12px; height: 15px; }
.thead .c3 { border: 0; padding-left: 5px; line-height: 17px; }
.trow { height: 18px; display: flex; align-items: center; color: #f4f4f4; font-family: "Open Sans", sans-serif; letter-spacing: -.25px; margin: 0 1px 0 -1px; padding-left: 4px; }
.trow.sel { background: #a0c69b; }
.trow i { width: 20px; height: 18px; background: #bbb; margin-right: 16px; flex: none; }
.trow .ck { background: #a0c69b; display: flex; }
.trow .ck::after { content: ""; width: 6px; height: 12px; border: solid #fff; border-width: 0 2px 2px 0; transform: rotate(38deg); margin: 1px 0 0 6px; }
.sel .ck { outline: 1px solid #a9b9a7; }
.trow svg { width: 14px; height: 14px; margin-right: 7px; }
.trow span, .trow b { line-height: 17px; margin-top: -2px; }
.t2 { margin-top: 4px; height: 30px; }
.d2 { height: 26px; }
.lhead { height: 23px; flex: none; margin: 0 1px 0 2px; background: #e8e8e8; color: #dfdfdf; font-weight: bold; padding: 3px 6px; font-size: 13px; }
.props { flex: 1; display: flex; justify-content: space-between; overflow: hidden; min-height: 0; }
.pcol { width: 576px; padding-left: 18px; }
.greenbit { width: 21px; height: 4px; background: #a0c69b; border: 1px solid #a5a5a5; border-top: 0; margin-left: 8px; }
.sect { height: 28px; display: flex; align-items: center; color: #f4f4f4; letter-spacing: .38px; }
.sect svg { width: 8px; height: 10px; margin: 0 10px 0 0; }
.sect.open { height: 18px; margin: 18px 0 19px; }
.sect.open b { border: 1px solid #d5bfa3; padding: 0 1px; margin-left: -2px; line-height: 15px; }
.line { display: flex; align-items: center; margin-left: 8px; height: 30px; letter-spacing: .1px; }
.box { width: 21px; height: 21px; background: #bbb; border: 1px solid #a6a6a6; margin-right: 6px; flex: none; }
.ckd { background: #a0c69b; display: flex; }
.ckd::after { content: ""; width: 7px; height: 14px; border: solid #fff; border-width: 0 2px 2px 0; transform: rotate(38deg); margin: 0 0 0 6px; }
.line span { flex: 1; }
.btn { width: 27px; height: 27px; background: #bbb; border: 1px solid #a8a8a8; display: flex; align-items: center; justify-content: center; flex: none; }
.upd { width: 77px; height: 27px; }
.list { margin: 2px 0 0 8px; width: 549px; height: 250px; border: 1px solid #bbb; background: #a7a7a7; display: flex; padding: 1px; }
.rows { flex: 1; overflow: hidden; color: #f4f4f4; letter-spacing: -.48px; font-family: "Open Sans", sans-serif; }
.r { height: 29px; margin-left: 40px; border-bottom: 2px solid #adadad; display: flex; align-items: center; padding-left: 3px; }
.r i { width: 19px; height: 19px; margin-right: 6px; }
.r.first { height: 22px; align-items: flex-start; line-height: 16px; }
.r.first i { height: 16px; }
.r.hot { background: #bbb; color: #a6a6a6; border-color: #bbb; }
.c-a { background: #bdb4b2; } .c-b { background: #c2b4b0; } .c-c { background: #c6b1af; } .c-d { background: #c6acab; } .c-e { background: #d6b1bb; } .c-f { background: #cba4ba; } .c-g { background: #cd9fd0; }
.g { height: 26px; margin-left: 20px; border-bottom: 2px solid #adadad; display: flex; align-items: center; padding: 2px 0 0 3px; letter-spacing: -.18px; }
.g svg { width: 16px; height: 13px; margin-right: 6px; }
.pos { height: 26px; position: relative; }
.pos::before { content: ""; position: absolute; left: -14px; top: 11px; border: 3px solid transparent; border-top: 6px solid #cfcfcf; border-bottom: 0; }
.lscroll { width: 12px; border: 1px solid #bbb; }
.lscroll i { height: 69px; background: #bbb; }
.btns { display: flex; gap: 3px; margin: 6px 0 0 8px; width: 549px; }
.btns svg { width: 20px; height: 20px; }
.off { background: #adadad; color: #b9b9b9; font-size: 14px; }
.flt { width: 46px; margin-left: auto; gap: 8px; }
.l1 { width: 549px; height: 30px; }
.l2 { width: 549px; margin-top: 7px; height: 30px; }
.dots { width: 31px; height: 27px; }
.l3 { height: 30px; margin-bottom: 7px; }
.pscroll { width: 12px; margin-right: 2px; background: #bbb; padding: 80px 1px 0; }
.pscroll i { height: 207px; background: #aeaeae; }
.status { flex: 1; display: flex; align-items: center; font-family: "Noto Sans", sans-serif; padding: 4px 0 0 6px; letter-spacing: .35px; }
.msg { width: 1260px; font-family: "Open Sans", sans-serif; letter-spacing: -.25px; }
.prog { width: 100px; height: 18px; border: 1px solid #bbb; display: flex; justify-content: space-between; margin-right: 10px; flex: none; }
.prog i { background: #efcca0; height: 16px; } .p1 { width: 15px; } .p2 { width: 35px; }
.sx { width: 107px; } .sy { width: 105px; } .sp { width: 102px; }
.zoom { width: 123px; height: 26px; border: 1px solid #bbb; background: #a7a7a7; display: flex; justify-content: space-between; align-items: center; padding-left: 5px; color: #f1f1f1; flex: none; letter-spacing: .1px; }
.zoom div { width: 20px; height: 24px; background: #bbb; display: flex; align-items: center; justify-content: center; }
.slide { display: flex; margin-left: 7px; flex: 1; height: 13px; margin-bottom: 3px; }
.fill { width: 3px; background: #a0c69b; } .knob { width: 32px; background: #bbb; border: 1px solid #a8a8a8; } .groove { flex: 1; background: #aaa; }
```
FILE: layout.js
```js
const NS = 'http://www.w3.org/2000/svg';
const el = (parent, name, attrs, text) => {
  const n = document.createElementNS(NS, name);
  for (const k in attrs) n.setAttribute(k, attrs[k]);
  if (text !== undefined) n.textContent = text;
  parent.appendChild(n);
  return n;
};
const byId = id => document.getElementById(id);

// Rulers: a tick each 2 mm, longer each 10 mm, labelled each 20 mm
const PX = 3.386, rulers = byId('rulers');
let ticks = '';
for (let mm = -14; mm <= 348; mm += 2) {
  const x = Math.floor(110.6 + mm * PX) + 0.5;
  if (x > 1287) break;
  ticks += `M${x} ${mm % 20 === 0 ? 125 : mm % 10 === 0 ? 137 : 140}V144`;
  if (mm % 20 === 0 && mm >= 0) {
    const s = String(mm);
    el(rulers, 'text', { x: x + 1, y: 136.5, textLength: s.length * 5.7, lengthAdjust: 'spacingAndGlyphs' }, s);
  }
}
for (let mm = -14; mm <= 252; mm += 2) {
  const y = Math.floor(194.6 + mm * PX) + 0.5;
  if (y > 1047.6) break;
  ticks += `M${mm % 20 === 0 ? 41 : mm % 10 === 0 ? 53 : 56} ${y}H60`;
  if (mm % 20 === 0 && mm >= 0) {
    const s = String(mm);
    el(rulers, 'text', { transform: `translate(52.5 ${y + 2}) rotate(-90)`, 'text-anchor': 'end', textLength: s.length * 5.9, lengthAdjust: 'spacingAndGlyphs' }, s);
  }
}
el(rulers, 'path', { d: ticks, stroke: '#dedede', fill: 'none' });
el(rulers, 'path', { d: 'M41 671.5H60M1279.5 125V144', stroke: '#ee8f8f', fill: 'none' });

// Faint street network and place-name specks
let seed = 7;
const rnd = () => (seed = (seed * 16807) % 2147483647) / 2147483647;
const roads = byId('roads');
let thin = '', wide = '', specks = '';
for (let i = 0; i < 1100; i++) {
  const x = 124 + rnd() * 500, y = 200 + rnd() * 705;
  if (x > 385 && x < 560 && y < 395) continue;
  const a = (rnd() < 0.5 ? 0 : Math.PI / 2) + (rnd() - 0.5) * 0.7, l = 8 + rnd() * 30;
  thin += `M${x.toFixed(1)} ${y.toFixed(1)}l${(Math.cos(a) * l).toFixed(1)} ${(Math.sin(a) * l).toFixed(1)}`;
}
for (let i = 0; i < 26; i++) {
  const x = 124 + rnd() * 480, y = 395 + rnd() * 500, a = (i % 2 ? 0.1 : 1.5) + (rnd() - 0.5) * 0.8, l = 60 + rnd() * 130;
  wide += `M${x.toFixed(1)} ${y.toFixed(1)}q${(Math.cos(a) * l / 2 + 8).toFixed(1)} ${(Math.sin(a) * l / 2 - 6).toFixed(1)} ${(Math.cos(a) * l).toFixed(1)} ${(Math.sin(a) * l).toFixed(1)}`;
}
for (let i = 0; i < 210; i++) {
  const x = 126 + rnd() * 486, y = 204 + rnd() * 694;
  specks += rnd() < 0.7 ? `M${x.toFixed(1)} ${y.toFixed(1)}h${(6 + rnd() * 9).toFixed(1)}` : `M${x.toFixed(1)} ${y.toFixed(1)}v${(6 + rnd() * 8).toFixed(1)}`;
}
el(roads, 'path', { d: thin, stroke: '#f5f6f6', fill: 'none' });
el(roads, 'path', { d: wide, stroke: '#fff', 'stroke-width': 1.6, fill: 'none' });
el(roads, 'path', { d: 'M124 560L190 541 330 541 395 556M292 200L318 320 335 410 330 520 345 600M124 590L240 535M124 500L260 380 330 410 450 400 520 385 620 400M550 410L545 600 548 740M275 690L300 850M124 870L330 720 370 620M310 890L240 760 124 640M560 200L570 300 510 410', stroke: '#fff', 'stroke-width': 2, fill: 'none' });
el(roads, 'path', { d: specks, stroke: '#e3e8eb', 'stroke-width': 2.2, 'stroke-dasharray': '2.2 .9', fill: 'none' });

// Buffers: rows of diamond cells inside a 20-sided outline
const COL = {
  V: '#d8a3dd', O: '#edb2d7', P: '#f7bfcf', S: '#f5bfcb', T: '#f9d2cf', L: '#fbe1da', C: '#f7ece8', W: '#e9ebee',
  g: '#d9d4db', m: '#d2becf', u: '#deb5d0', r: '#ebb3cb', p: '#f3bac5', s: '#f7c6c5', o: '#fad5ca', c: '#faeae2'
};
function gon(id, cx, cy, rx, ry) {
  let d = '';
  for (let i = 0; i < 20; i++) {
    const a = i * Math.PI / 10 + 0.02;
    d += (i ? 'L' : 'M') + (cx + rx * Math.cos(a)).toFixed(1) + ' ' + (cy + ry * Math.sin(a)).toFixed(1);
  }
  byId(id).setAttribute('d', d + 'Z');
  return d + 'Z';
}
function cells(id, outline, x0, y0, xMid, rows, fill) {
  const g = byId(id);
  el(g, 'path', { d: outline, fill });
  rows.forEach(([k, startX, str]) => {
    [...str].forEach((ch, m) => {
      const cx = startX + 60 * m;
      const X = x0 + (cx + 0.8 * k) / 3, Y = y0 + 9.2 * k - 0.005 * (cx - xMid);
      const d = `M${X - 10} ${Y}L${X - .2} ${Y - 9.3}L${X + 10} ${Y - .1}L${X + .2} ${Y + 9.3}Z`;
      el(g, 'path', { d, fill: COL[ch], 'fill-opacity': ch === 'C' || ch === 'W' ? 0.75 : 1, stroke: '#fff', 'stroke-opacity': 0.12, 'stroke-width': 0.5 });
    });
  });
  el(g, 'path', { d: outline, fill: 'none', stroke: '#e3c3d0', 'stroke-width': 1.4 });
}
cells('circA', gon('gonA', 469.4, 507.7, 81, 75.4), 360, 536.3, 467, [
  [-11, 257, 'CCSS'], [-10, 227, 'CLPOO'], [-9, 197, 'LTLPPS'], [-8, 167, 'LOPLPSO'], [-7, 137, 'SVOPOLT'],
  [-6, 107, 'PVVPPPTV'], [-5, 137, 'VOOTPTVV'], [-4, 107, 'VVOTOTOO'], [-3, 77, 'VVOOOTVOL'], [-2, 107, 'POTOVVVS'],
  [-1, 77, 'SOCPVVOSL'], [0, 107, 'OSPVOOVV'], [1, 137, 'VVOOOOPP'], [2, 167, 'VOPPOOV'], [3, 197, 'OPPPVS'],
  [4, 227, 'PTPTS'], [5, 257, 'STST']
], '#f5c0ce');
cells('circB', gon('gonB', 274.5, 609, 81.3, 75.2), 180, 561.7, 160, [
  [-3, 190, 'OOVO'], [-2, 160, 'OTOVV'], [-1, 130, 'OOOVVO'], [0, 100, 'LVOOOOO'], [1, 70, 'TOOPOOOO'],
  [2, 40, 'PPOOPOPOO'], [3, 70, 'OPOOPPOT'], [4, 40, 'CPVPPPOLP'], [5, 70, 'CPTTPTCT'], [6, 40, 'CCLLLCTPO'],
  [7, 70, 'TCCCLOOO'], [8, 40, 'SLCCTPOLP'], [9, 70, 'SOCPPTOP'], [10, 100, 'PPWPTPO'], [11, 130, 'PTWOPS'],
  [12, 160, 'SSCOO'], [13, 190, 'SSSP']
], '#f6c4cc');
cells('circC', gon('gonC', 958.2, 501.7, 80.2, 74.6), 640, 484.5, 880, [
  [-7, 850, 'uuuu'], [-6, 820, 'uuuup'], [-5, 791, 'uugmus'], [-4, 762, 'rggrugu'], [-3, 732, 'rropmorr'],
  [-2, 703, 'rrsopmgur'], [-1, 732, 'pcpposgr'], [0, 703, 'sormpprss'], [1, 732, 'rpcurmop'], [2, 703, 'umccurops'],
  [3, 732, 'urprorsc'], [4, 703, 'sormmorcs'], [5, 732, 'ucoompps'], [6, 762, 'csocprpo'], [7, 791, 'msupcpo'],
  [8, 821, 'crmuop'], [9, 850, 'pmumr'], [10, 821, 'rrgrr']
], '#f0bccb');

// Map legends
const lg = byId('legends');
const W = { 7: 45, 8: 52.5, 10: 68, 11: 76.5, 12: 84.5, 13: 92.5, 14: 92.5 };
const label = (s, x, y, w) => el(lg, 'text', { x, y, textLength: w || W[s.length], lengthAdjust: 'spacingAndGlyphs' }, s);
const vol = ['0 - 1245', '1245 - 3559', '3559 - 6027', '6027 - 8485', '8485 - 10909', '10909 - 13642', '13642 - 16988', '16988 - 21817', '21817 - 33729', '33729 - 55243'];
const volC = ['#fff', '#fffdfc', '#fff9f6', '#fff3f0', '#ffecea', '#fee6e6', '#fcdae4', '#f6cfe7', '#e0b2e2', '#b9add0'];
const ppl = ['3 - 486', '486 - 1481', '1481 - 2924', '2924 - 4855', '4855 - 7408', '7408 - 10965', '10965 - 16150', '16150 - 24417', '24417 - 44922', '44922 - 86613'];
const pplC = ['#e9eaec', '#dddce1', '#d4c6d5', '#ddbfd4', '#eabdd3', '#f5c4cb', '#fad2cd', '#fbe1d8', '#fdeee6', '#fef9f5'];
const swatch = (x, y, c) => el(lg, 'rect', { x, y, width: 24.4, height: 14, fill: c });
label('Building Volume', 131, 232.6, 99.5);
vol.slice(0, 9).forEach((s, i) => { label(s, 161.5, 254.6 + 22 * i); swatch(131, 243 + 22 * i, volC[i]); });
label('Positron', 131, 455, 50);
label('Building Volume', 667.5, 256, 99.5);
vol.forEach((s, i) => { label(s, 667.5, 278.3 + 22 * i); swatch(846.5, 266 + 22 * i, volC[i]); });
label('# of People Coming and Going.', 668, 500.6, 192.5);
ppl.forEach((s, i) => { label(s, 667.5, 522.2 + 22 * i); swatch(846.5, 510.3 + 22 * i, pplC[i]); });
```
